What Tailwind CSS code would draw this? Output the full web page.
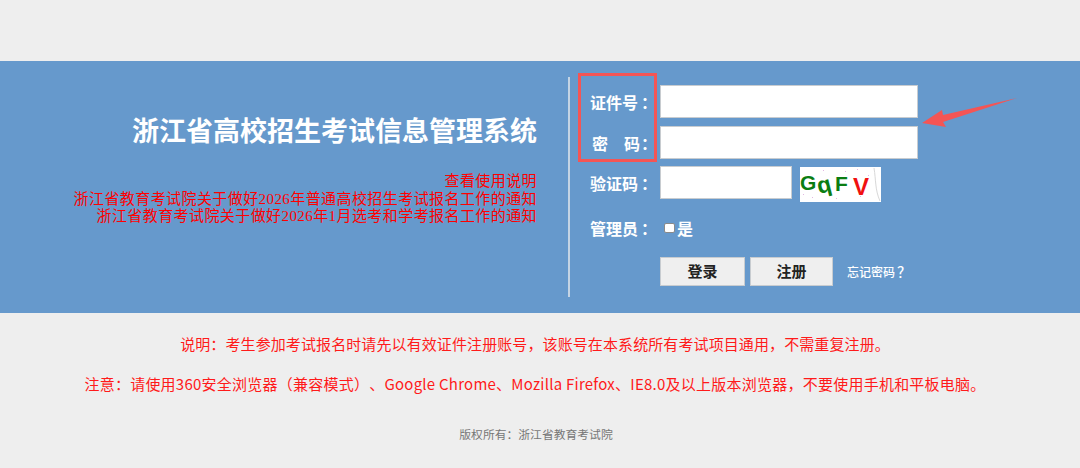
<!DOCTYPE html>
<html lang="zh-CN">
<head>
    <meta charset="UTF-8">
    <title>浙江省高校招生考试信息管理系统</title>
    <script src="https://cdn.jsdelivr.net/npm/@tailwindcss/browser@4"></script>
</head>
<body class="relative h-[468px] w-[1080px] overflow-hidden bg-[#eeeeee] font-['Noto_Sans_CJK_SC','Noto_Sans',sans-serif]">

    <div class="h-[61px]"></div>

    <!-- Login band -->
    <div class="flex h-[252px] bg-[#6699cc]">
        <!-- Title and notices -->
        <div class="w-[537px] pt-[51px] text-right">
            <h1 class="text-[27px] leading-[36px] font-bold whitespace-nowrap text-white">浙江省高校招生考试信息管理系统</h1>
            <div class="mt-[25px] font-['Liberation_Serif','Noto_Sans_CJK_SC',serif] text-[15px] leading-[17.5px] tracking-[0.42px] whitespace-nowrap text-[#ff0000]">
                <p>查看使用说明</p>
                <p>浙江省教育考试院关于做好2026年普通高校招生考试报名工作的通知</p>
                <p>浙江省教育考试院关于做好2026年1月选考和学考报名工作的通知</p>
            </div>
        </div>

        <div class="mt-[16px] ml-[31px] h-[220px] w-[2px] bg-[#c4d4e4]"></div>

        <!-- Form -->
        <div class="ml-[20px] pt-[24px] text-[16px] font-bold text-white">
            <div class="flex h-[33px] items-center">
                <span class="w-[70px] pt-[2px] leading-[33px]">证件号<span class="ml-[3px] font-['Noto_Sans_CJK_TC']">：</span></span>
                <div class="h-[33px] w-[258px] border border-[#c8ccd0] bg-white"></div>
            </div>
            <div class="mt-[8px] flex h-[33px] items-center">
                <span class="w-[70px] pt-[2px] leading-[33px]"><span class="ml-[2px]">密</span><span class="ml-[16px]">码</span><span class="ml-[1px] font-['Noto_Sans_CJK_TC']">：</span></span>
                <div class="h-[33px] w-[258px] border border-[#c8ccd0] bg-white"></div>
            </div>
            <div class="mt-[7px] flex h-[33px] items-center">
                <span class="w-[70px] pt-[2px] leading-[33px]">验证码<span class="ml-[3px] font-['Noto_Sans_CJK_TC']">：</span></span>
                <div class="h-[33px] w-[132px] border border-[#c8ccd0] bg-white"></div>
                <svg class="mt-[3px] ml-[8px] h-[35px] w-[81px] bg-white" viewBox="0 0 81 35">
                    <path d="M74 1c2 12 1 22 6 33" fill="none" stroke="#d8d8d8"/>
                    <g fill="#e2b8e2">
                        <rect x="23" y="3" width="1" height="1"/><rect x="45" y="4" width="1" height="1"/>
                        <rect x="57" y="2" width="1" height="1"/><rect x="12" y="30" width="1" height="1"/>
                        <rect x="36" y="31" width="1" height="1"/><rect x="60" y="29" width="1" height="1"/>
                        <rect x="3" y="27" width="1" height="1"/><rect x="68" y="8" width="1" height="1"/>
                    </g>
                    <g font-family="Liberation Sans" font-weight="bold" font-size="21">
                        <text x="0" y="23" fill="#0a7d12">G</text>
                        <text x="0" y="0" fill="#0a7d12" font-size="23" transform="translate(19 27) rotate(-14)">q</text>
                        <text x="35" y="24" fill="#0a7d12">F</text>
                        <text x="53" y="28" fill="#f01010" font-size="24">V</text>
                    </g>
                </svg>
            </div>
            <div class="mt-[13px] flex h-[32px] items-center">
                <span class="w-[74px] leading-[32px]">管理员<span class="ml-[3px] font-['Noto_Sans_CJK_TC']">：</span></span>
                <span class="h-[10px] w-[11px] rounded-[2px] border border-[#8a8a8a] bg-white"></span>
                <span class="ml-[2px]">是</span>
            </div>
            <div class="mt-[13px] ml-[70px] flex h-[29px] items-center">
                <div class="flex h-[29px] w-[85px] items-center justify-center border border-[#c8ccd0] bg-[#efefef] text-[15px] text-[#222222]">登录</div>
                <div class="ml-[5px] flex h-[29px] w-[83px] items-center justify-center border border-[#c8ccd0] bg-[#efefef] text-[15px] text-[#222222]">注册</div>
                <span class="ml-[14px] text-[12px] font-medium whitespace-nowrap">忘记密码<span class="ml-[2px] text-[14px] font-['Noto_Sans_CJK_TC']">？</span></span>
            </div>
        </div>
    </div>

    <!-- Notes -->
    <div class="pr-[10px] text-center text-[15px] leading-[20px] tracking-[0.1px] text-[#ff1a1a] [text-spacing-trim:space-all]">
        <p class="mt-[21px] whitespace-nowrap">说明：考生参加考试报名时请先以有效证件注册账号，该账号在本系统所有考试项目通用，不需重复注册。</p>
        <p class="mt-[20px] tracking-[0.24px] whitespace-nowrap">注意：请使用360安全浏览器（兼容模式）、Google Chrome、Mozilla Firefox、IE8.0及以上版本浏览器，不要使用手机和平板电脑。</p>
        <p class="mt-[30px] pl-[2px] text-[11.8px] tracking-normal text-[#777777]">版权所有：浙江省教育考试院</p>
    </div>

    <!-- Annotations on top of the screenshot -->
    <div class="absolute top-[73px] left-[578px] h-[89px] w-[79px] border-[3px] border-[#f45555]"></div>
    <svg class="absolute top-[90px] left-[915px]" width="110" height="45" viewBox="0 0 110 45">
        <path d="M7 33 L27 20 L28 25 L102 8 L28 32 L31 37 Z" fill="#f45555"/>
    </svg>
</body>
</html>
